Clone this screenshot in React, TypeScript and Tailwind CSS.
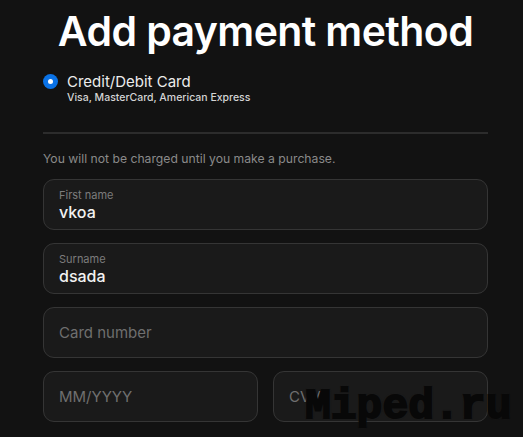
const font = { fontFamily: "Inter, 'Liberation Sans', sans-serif" };

function Field({ label, value, placeholder, className = "" }: { label?: string; value?: string; placeholder?: string; className?: string }) {
  return (
    <div className={`flex h-[51px] flex-col justify-center rounded-[11px] border border-[#353535] bg-[#1a1a1a] px-[15px] ${className}`}>
      {label ? (
        <>
          <span className="text-[11px] leading-[14px] text-[#7c7c7c]">{label}</span>
          <span className="text-[16px] leading-[20px] font-medium text-[#f2f2f2]">{value}</span>
        </>
      ) : (
        <span className="text-[15px] leading-[20px] text-[#6f6f6f]">{placeholder}</span>
      )}
    </div>
  );
}

export default function App() {
  return (
    <div className="relative h-[437px] w-[523px] overflow-hidden bg-[#121212]" style={font}>
      <div className="ml-[43px] w-[445px] pt-[6px]">
        <h1 className="text-center text-[41px] leading-[50px] font-semibold tracking-[-0.6px] text-white">
          Add payment method
        </h1>
        <div className="mt-[17px] flex items-start gap-[9px]">
          <div className="mt-[1px] flex h-[15px] w-[15px] items-center justify-center rounded-full bg-[#0a72e6]">
            <div className="h-[5px] w-[5px] rounded-full bg-white" />
          </div>
          <div className="flex flex-col">
            <span className="text-[15px] leading-[18px] text-[#ececec]">Credit/Debit Card</span>
            <span className="text-[10.5px] leading-[14px] font-medium text-[#d4d4d4]">Visa, MasterCard, American Express</span>
          </div>
        </div>
        <div className="mt-[27px] h-[2px] bg-[#2c2c2c]" />
        <p className="mt-[17px] text-[12.2px] leading-[16px] text-[#8a8a8a]">You will not be charged until you make a purchase.</p>
        <div className="mt-[12px] flex flex-col gap-[13px]">
          <Field label="First name" value="vkoa" />
          <Field label="Surname" value="dsada" />
          <Field placeholder="Card number" />
          <div className="flex gap-[15px]">
            <Field placeholder="MM/YYYY" className="w-[215px]" />
            <Field placeholder="CVV" className="flex-1" />
          </div>
        </div>
      </div>
      <span
        className="absolute top-[382px] left-[305px] text-[43px] leading-[50px] font-bold text-[#080808]"
        style={{ fontFamily: "'Liberation Mono', monospace", WebkitTextStroke: "2px #080808", textShadow: "0 0 2px #2a2a2a" }}
      >
        Miped.ru
      </span>
    </div>
  );
}
